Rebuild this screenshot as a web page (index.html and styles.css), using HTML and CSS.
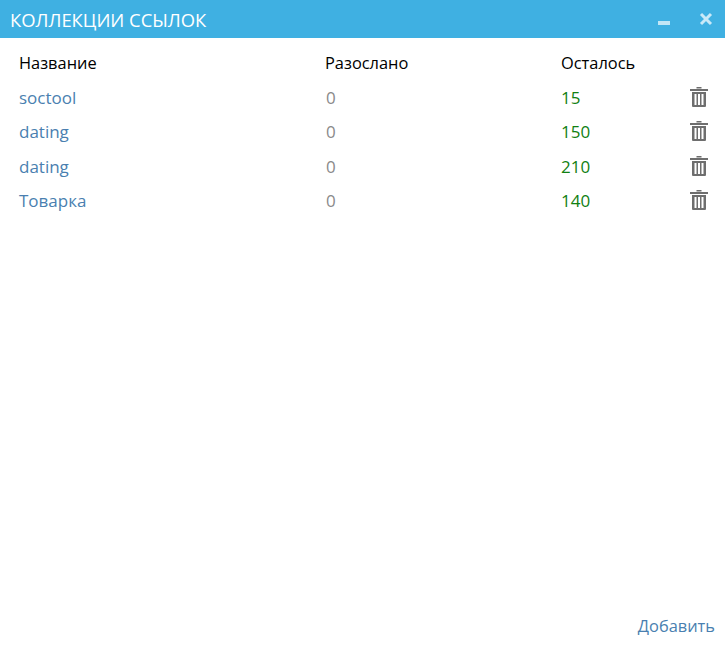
FILE: index.html
```html
<!DOCTYPE html>
<html lang="ru">
<head>
    <meta charset="UTF-8">
    <title>Коллекции ссылок</title>
    <link rel="stylesheet" href="styles.css">
</head>
<body>
    <div class="window">
        <header class="titlebar">
            <span class="title">КОЛЛЕКЦИИ ССЫЛОК</span>
            <div class="controls">
                <span class="minimize"></span>
                <svg class="close" viewBox="0 0 14 14" width="14" height="14"><path d="M2 2 L12 12 M12 2 L2 12"/></svg>
            </div>
        </header>
        <div class="list">
            <div class="row head">
                <span>Название</span>
                <span>Разослано</span>
                <span>Осталось</span>
                <span></span>
            </div>
            <div class="row">
                <a class="name">soctool</a>
                <span class="sent">0</span>
                <span class="left">15</span>
                <svg class="trash" viewBox="0 0 18 21" width="18" height="21"><path d="M6.5 2.5 V1 H11.5 V2.5 M0 3 H18 V5 H0 Z M2 6 H16 V20 Q16 21 15 21 H3 Q2 21 2 20 Z M4.5 8 V19 H6.5 V8 Z M8 8 V19 H10 V8 Z M11.5 8 V19 H13.5 V8 Z" fill-rule="evenodd"/></svg>
            </div>
            <div class="row">
                <a class="name">dating</a>
                <span class="sent">0</span>
                <span class="left">150</span>
                <svg class="trash" viewBox="0 0 18 21" width="18" height="21"><path d="M6.5 2.5 V1 H11.5 V2.5 M0 3 H18 V5 H0 Z M2 6 H16 V20 Q16 21 15 21 H3 Q2 21 2 20 Z M4.5 8 V19 H6.5 V8 Z M8 8 V19 H10 V8 Z M11.5 8 V19 H13.5 V8 Z" fill-rule="evenodd"/></svg>
            </div>
            <div class="row">
                <a class="name">dating</a>
                <span class="sent">0</span>
                <span class="left">210</span>
                <svg class="trash" viewBox="0 0 18 21" width="18" height="21"><path d="M6.5 2.5 V1 H11.5 V2.5 M0 3 H18 V5 H0 Z M2 6 H16 V20 Q16 21 15 21 H3 Q2 21 2 20 Z M4.5 8 V19 H6.5 V8 Z M8 8 V19 H10 V8 Z M11.5 8 V19 H13.5 V8 Z" fill-rule="evenodd"/></svg>
            </div>
            <div class="row">
                <a class="name">Товарка</a>
                <span class="sent">0</span>
                <span class="left">140</span>
                <svg class="trash" viewBox="0 0 18 21" width="18" height="21"><path d="M6.5 2.5 V1 H11.5 V2.5 M0 3 H18 V5 H0 Z M2 6 H16 V20 Q16 21 15 21 H3 Q2 21 2 20 Z M4.5 8 V19 H6.5 V8 Z M8 8 V19 H10 V8 Z M11.5 8 V19 H13.5 V8 Z" fill-rule="evenodd"/></svg>
            </div>
        </div>
        <footer class="actions">
            <a class="add">Добавить</a>
        </footer>
    </div>
</body>
</html>
```

FILE: styles.css
```css
html, body {
    margin: 0;
    padding: 0;
    height: 100%;
    background-color: #fff;
}
body {
    font-family: "Open Sans", "Noto Sans", sans-serif;
    font-size: 16.4px;
    color: #000;
    overflow: hidden;
}
.window {
    height: 646px;
    display: flex;
    flex-direction: column;
}
.titlebar {
    height: 38px;
    flex: none;
    background-color: #3fb0e2;
    color: #fff;
    display: flex;
    align-items: center;
    justify-content: space-between;
    padding: 0 12px 0 10px;
}
.title {
    font-size: 18.4px;
}
.controls {
    display: flex;
    align-items: center;
    gap: 29px;
}
.minimize {
    width: 12px;
    height: 4px;
    margin-top: 7px;
    background-color: #c3e6f6;
}
.close {
    stroke: #c9e9f8;
    stroke-width: 3;
    fill: none;
}
.list {
    flex: 1;
    padding: 7.5px 17px 0 19px;
}
.row {
    display: grid;
    grid-template-columns: 306px 236px 1fr 18px;
    align-items: center;
    height: 34.5px;
}
.name, .sent, .left {
    font-size: 17px;
}
.name, .add {
    color: #4a7fb0;
}
.sent {
    color: #8a8a8a;
    padding-left: 1px;
}
.left {
    color: #118011;
}
.trash {
    fill: #6e6e6e;
    stroke: none;
    margin-top: -2px;
}
.actions {
    flex: none;
    display: flex;
    justify-content: flex-end;
    padding: 0 10px 9px 0;
}
.add {
    font-size: 16.4px;
}
```
